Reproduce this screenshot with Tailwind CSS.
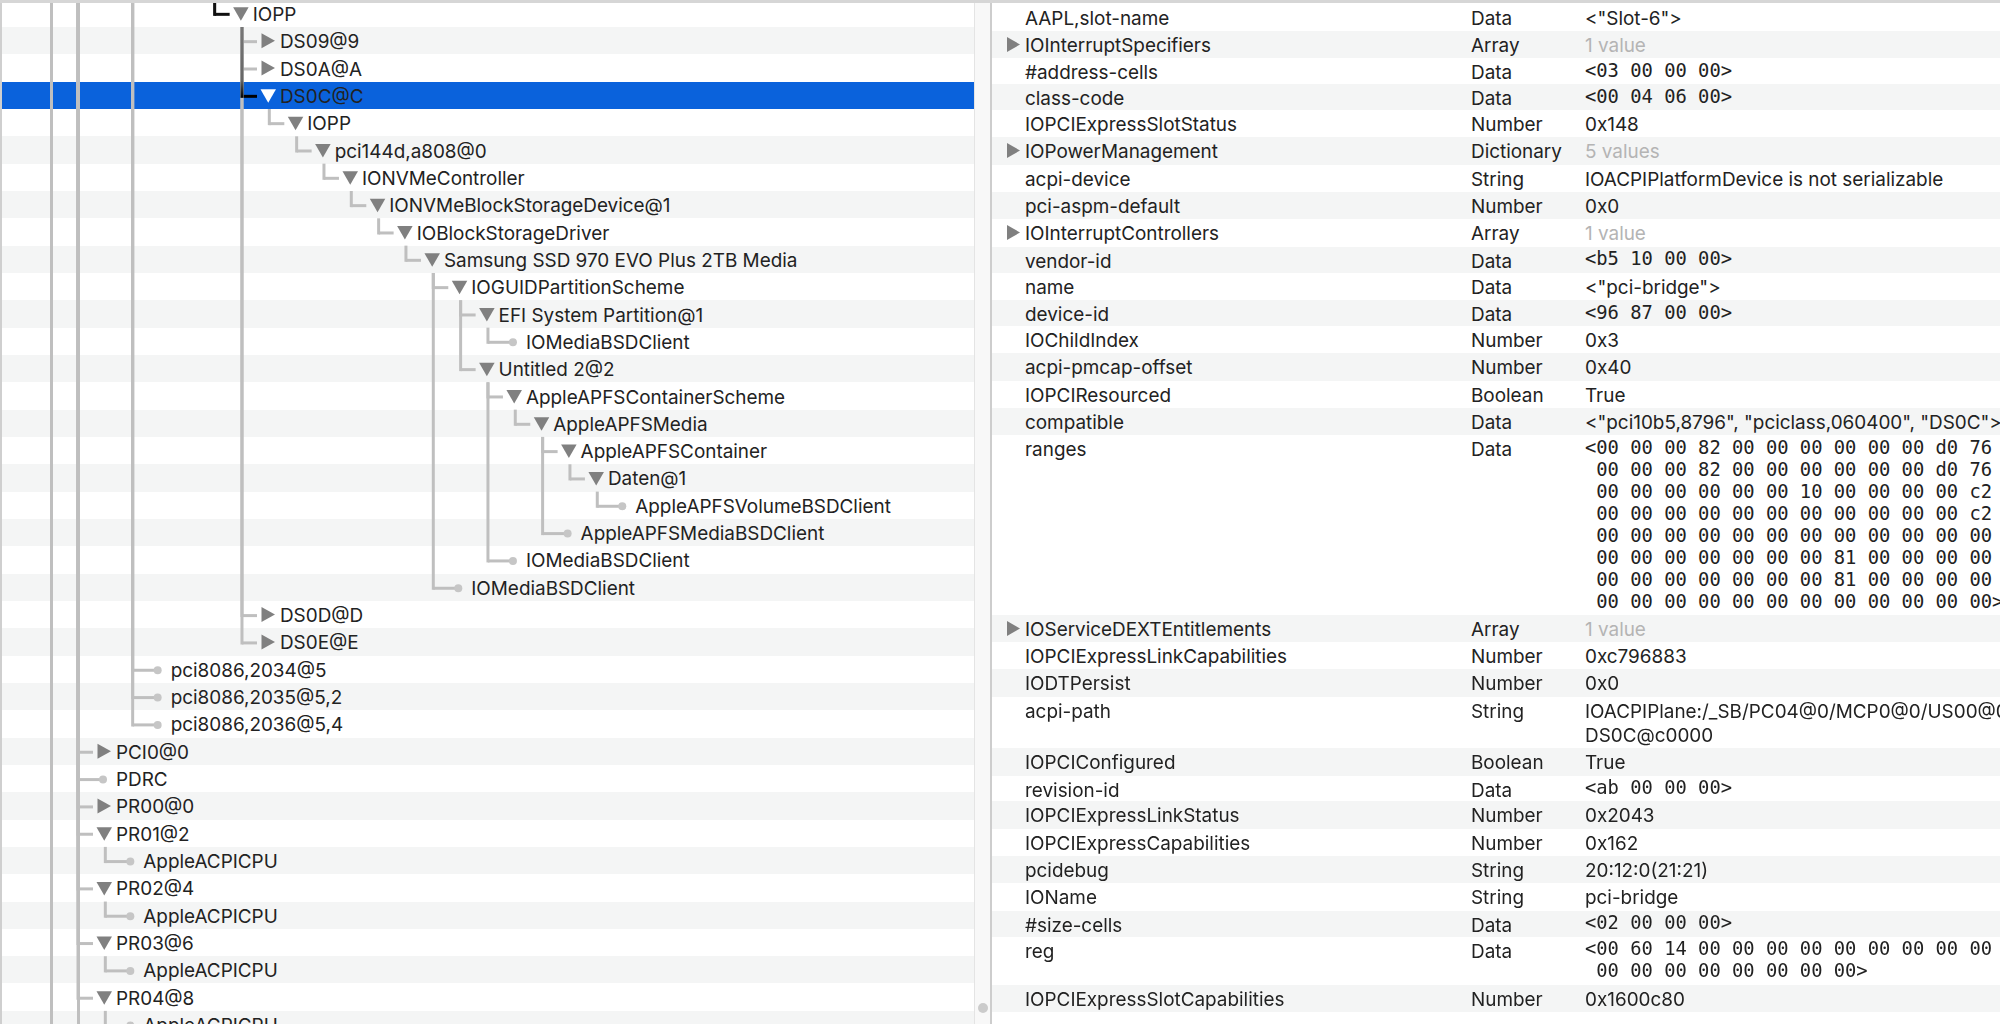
<!DOCTYPE html>
<html lang="en">
<head>
  <meta charset="UTF-8">
  <title>IORegistryExplorer</title>
  <script src="https://cdn.jsdelivr.net/npm/@tailwindcss/browser@4"></script>
</head>
<body class="bg-white">
  <div class="relative flex w-[2000px] h-[1024px] overflow-hidden font-['Inter',sans-serif] text-[18.9px] text-[#222] blur-[0.35px]">
    <div class="absolute inset-x-0 top-0 h-[3px] bg-[#d6d6d6] z-20"></div>

    <!-- tree -->
    <div id="tree" class="relative w-[974px] h-full shrink-0 overflow-hidden border-l-2 border-[#cfcfcf] box-border"></div>

    <!-- splitter -->
    <div class="relative w-[18px] h-full shrink-0 bg-[#f8f8f8] border-l border-[#e4e4e4] border-r-2 border-r-[#cdcdcd]">
      <div class="absolute left-[3px] top-[1003px] w-[10px] h-[10px] rounded-full bg-[#cbcbcb]"></div>
    </div>

    <!-- properties -->
    <div id="props" class="flex-1 min-w-0 pt-[3.67px] overflow-hidden"></div>
  </div>

  <script>
    const rowH = 27.33;
    // [name, depth, kind] kind: d = open, r = closed, l = leaf
    const tree = [
      ['IOPP', 5, 'd'], ['DS09@9', 6, 'r'], ['DS0A@A', 6, 'r'], ['DS0C@C', 6, 'd'],
      ['IOPP', 7, 'd'], ['pci144d,a808@0', 8, 'd'], ['IONVMeController', 9, 'd'],
      ['IONVMeBlockStorageDevice@1', 10, 'd'], ['IOBlockStorageDriver', 11, 'd'],
      ['Samsung SSD 970 EVO Plus 2TB Media', 12, 'd'], ['IOGUIDPartitionScheme', 13, 'd'],
      ['EFI System Partition@1', 14, 'd'], ['IOMediaBSDClient', 15, 'l'], ['Untitled 2@2', 14, 'd'],
      ['AppleAPFSContainerScheme', 15, 'd'], ['AppleAPFSMedia', 16, 'd'], ['AppleAPFSContainer', 17, 'd'],
      ['Daten@1', 18, 'd'], ['AppleAPFSVolumeBSDClient', 19, 'l'], ['AppleAPFSMediaBSDClient', 17, 'l'],
      ['IOMediaBSDClient', 15, 'l'], ['IOMediaBSDClient', 13, 'l'], ['DS0D@D', 6, 'r'], ['DS0E@E', 6, 'r'],
      ['pci8086,2034@5', 2, 'l'], ['pci8086,2035@5,2', 2, 'l'], ['pci8086,2036@5,4', 2, 'l'],
      ['PCI0@0', 0, 'r'], ['PDRC', 0, 'l'], ['PR00@0', 0, 'r'],
      ['PR01@2', 0, 'd'], ['AppleACPICPU', 1, 'l'], ['PR02@4', 0, 'd'], ['AppleACPICPU', 1, 'l'],
      ['PR03@6', 0, 'd'], ['AppleACPICPU', 1, 'l'], ['PR04@8', 0, 'd'], ['AppleACPICPU', 1, 'l']
    ];
    const selected = 3;
    const textX = d => 116 + rowH * d;
    const rowTop = i => i * rowH - 0.33;
    const mid = i => rowTop(i) + rowH / 2;

    let rows = '';
    let svg = '';
    const line = (x1, y1, x2, y2, color = '#bfbfbf') =>
      `<line x1="${x1}" y1="${y1}" x2="${x2}" y2="${y2}" stroke="${color}" stroke-width="3"/>`;

    tree.forEach(([name, d, kind], i) => {
      const bg = i === selected ? 'bg-[#0a62dc]' : i % 2 ? 'bg-[#f4f5f5]' : 'bg-white';
      rows += `<div class="flex items-center pt-[3.5px] ${bg}" style="height:${rowTop(i + 1) - Math.max(rowTop(i), 0)}px;padding-left:${textX(d) - 2}px">${name}</div>`;

      const T = textX(d), y = mid(i), spine = T - 38;
      // spine up to the parent row
      let p = i - 1;
      while (p >= 0 && tree[p][1] >= d) p--;
      const from = p >= 0 ? rowTop(p + 1) : 0;
      const onPath = i === selected;
      if (!onPath) svg += line(spine, from, spine, y + 2.5);
      if (i === 0) svg += line(spine, 0, spine, y + 2.5, '#111') + line(spine, y + 1, T - 23, y + 1, '#111');
      else if (onPath) svg += line(spine, y + 1, T - 23, y + 1, '#000');
      else svg += line(spine, y + 1, kind === 'l' ? T - 13 : T - 23, y + 1);

      const fill = i === selected ? '#ffffff' : '#808080';
      if (kind === 'd') svg += `<path d="M${T - 19.5} ${y - 6}h15.5l-7.75 13.5z" fill="${fill}"/>`;
      if (kind === 'r') svg += `<path d="M${T - 18.5} ${y - 7.5}l13.5 7.5l-13.5 7.5z" fill="${fill}"/>`;
      if (kind === 'l') svg += `<circle cx="${T - 13}" cy="${y + 1}" r="4" fill="#c6c6c6"/>`;
    });

    // the two outer spines run past the visible rows, the selected path is darker
    const outer = line(51.5, 0, 51.5, 1024) + line(78.5, 0, 78.5, 1024);
    const pathLine = `<linearGradient id="path" x1="0" y1="0" x2="0" y2="1"><stop offset="0" stop-color="#777"/><stop offset="0.75" stop-color="#666"/><stop offset="1" stop-color="#000"/></linearGradient>` +
      `<rect x="240.5" y="${rowTop(1)}" width="3" height="${mid(selected) - rowTop(1) + 2.5}" fill="url(#path)"/>`;

    document.getElementById('tree').innerHTML = rows +
      `<svg class="absolute left-[-2px] top-0 pointer-events-none" width="974" height="1024">${outer}${svg}${pathLine}</svg>`;

    // [name, type, value, opts] mono = hex data, open = has disclosure, wrap = two text lines
    const props = [
      ['AAPL,slot-name', 'Data', '<"Slot-6">'],
      ['IOInterruptSpecifiers', 'Array', '1 value', 'open'],
      ['#address-cells', 'Data', '<03 00 00 00>', 'mono'],
      ['class-code', 'Data', '<00 04 06 00>', 'mono'],
      ['IOPCIExpressSlotStatus', 'Number', '0x148'],
      ['IOPowerManagement', 'Dictionary', '5 values', 'open'],
      ['acpi-device', 'String', 'IOACPIPlatformDevice is not serializable'],
      ['pci-aspm-default', 'Number', '0x0'],
      ['IOInterruptControllers', 'Array', '1 value', 'open'],
      ['vendor-id', 'Data', '<b5 10 00 00>', 'mono'],
      ['name', 'Data', '<"pci-bridge">'],
      ['device-id', 'Data', '<96 87 00 00>', 'mono'],
      ['IOChildIndex', 'Number', '0x3'],
      ['acpi-pmcap-offset', 'Number', '0x40'],
      ['IOPCIResourced', 'Boolean', 'True'],
      ['compatible', 'Data', '<"pci10b5,8796", "pciclass,060400", "DS0C">'],
      ['ranges', 'Data', `<00 00 00 82 00 00 00 00 00 00 d0 76
 00 00 00 82 00 00 00 00 00 00 d0 76
 00 00 00 00 00 00 10 00 00 00 00 c2
 00 00 00 00 00 00 00 00 00 00 00 c2
 00 00 00 00 00 00 00 00 00 00 00 00
 00 00 00 00 00 00 00 81 00 00 00 00
 00 00 00 00 00 00 00 81 00 00 00 00
 00 00 00 00 00 00 00 00 00 00 00 00>`, 'mono'],
      ['IOServiceDEXTEntitlements', 'Array', '1 value', 'open'],
      ['IOPCIExpressLinkCapabilities', 'Number', '0xc796883'],
      ['IODTPersist', 'Number', '0x0'],
      ['acpi-path', 'String', 'IOACPIPlane:/_SB/PC04@0/MCP0@0/US00@0/\nDS0C@c0000', 'wrap'],
      ['IOPCIConfigured', 'Boolean', 'True'],
      ['revision-id', 'Data', '<ab 00 00 00>', 'mono'],
      ['IOPCIExpressLinkStatus', 'Number', '0x2043'],
      ['IOPCIExpressCapabilities', 'Number', '0x162'],
      ['pcidebug', 'String', '20:12:0(21:21)'],
      ['IOName', 'String', 'pci-bridge'],
      ['#size-cells', 'Data', '<02 00 00 00>', 'mono'],
      ['reg', 'Data', `<00 60 14 00 00 00 00 00 00 00 00 00
 00 00 00 00 00 00 00 00>`, 'mono'],
      ['IOPCIExpressSlotCapabilities', 'Number', '0x1600c80']
    ];

    const esc = s => s.replace(/&/g, '&amp;').replace(/</g, '&lt;');
    document.getElementById('props').innerHTML = props.map(([name, type, value, opt], i) => {
      const lines = value.split('\n').length;
      const h = opt === 'mono' ? lines * 21.93 + 4 : opt === 'wrap' ? 51.5 : rowH;
      const bg = i % 2 ? 'bg-[#f4f5f5]' : 'bg-white';
      const tri = opt === 'open'
        ? '<svg class="absolute left-[15px] top-[6px]" width="13" height="15"><path d="M0 0l13 7.5l-13 7.5z" fill="#808080"/></svg>'
        : '';
      let val;
      if (opt === 'mono') val = `<div class="whitespace-pre font-['DejaVu_Sans_Mono',monospace] text-[18.8px] leading-[22.1px] pt-[1.5px]">${esc(value)}</div>`;
      else if (opt === 'open') val = `<div class="text-[#b4b4b4] leading-[29.5px]">${esc(value)}</div>`;
      else if (opt === 'wrap') val = `<div class="whitespace-pre leading-[23.6px] pt-[3.5px]">${esc(value)}</div>`;
      else val = `<div class="whitespace-pre leading-[29.5px]">${esc(value)}</div>`;
      return `<div class="relative grid grid-cols-[479px_114px_1fr] ${bg}" style="height:${h}px">
        ${tri}
        <div class="pl-[33px] leading-[29.5px]">${esc(name)}</div>
        <div class="leading-[29.5px]">${type}</div>
        ${val}
      </div>`;
    }).join('');
  </script>
</body>
</html>
